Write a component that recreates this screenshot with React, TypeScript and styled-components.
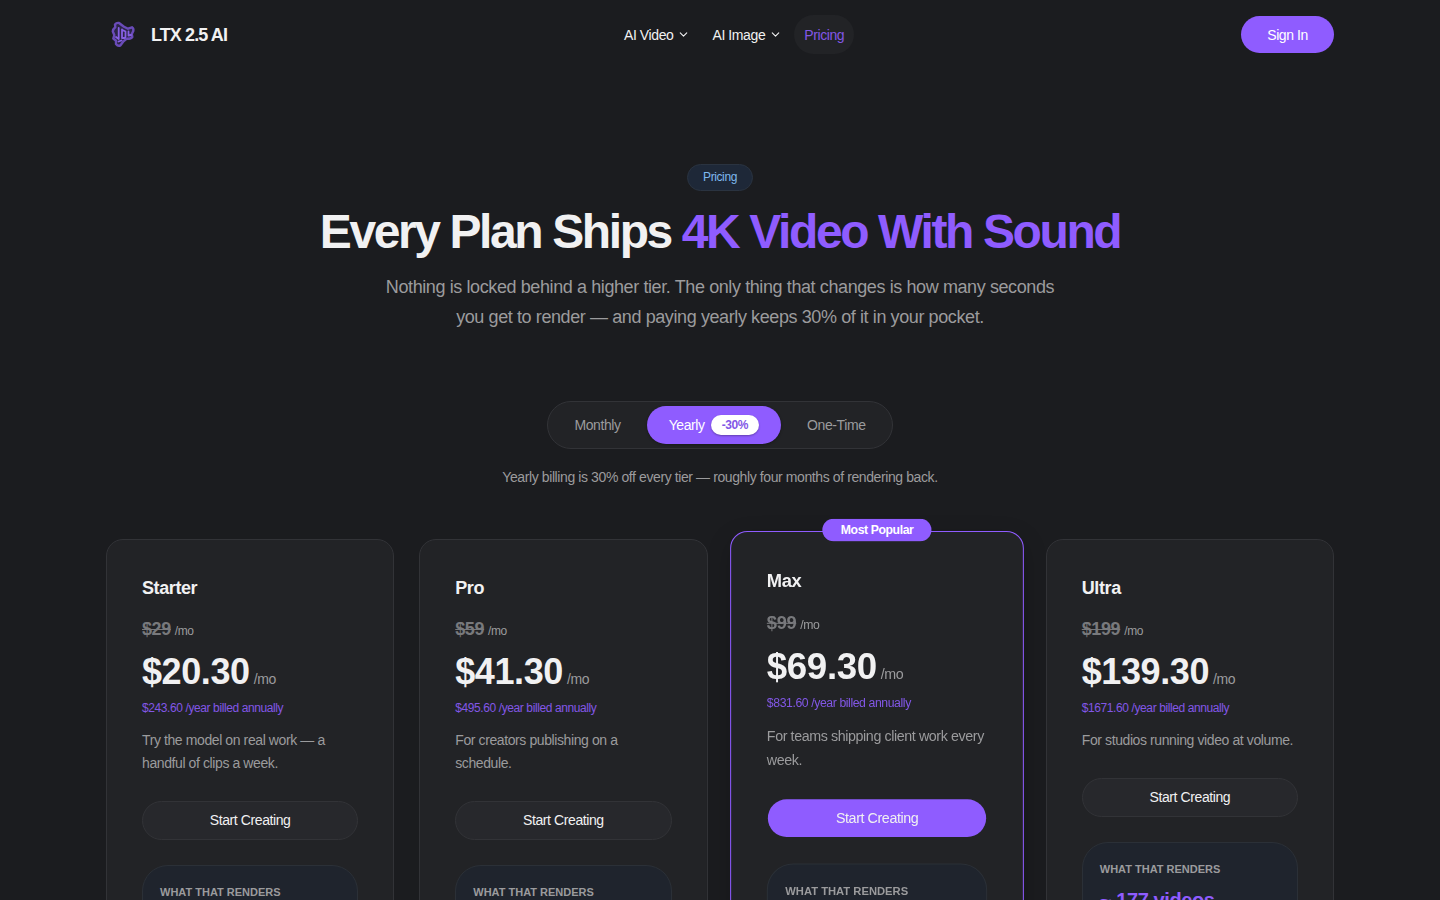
import React from "react";
import styled, { createGlobalStyle, css } from "styled-components";
import { ChevronDown } from "lucide-react";

const color = {
  page: "#1b1c1f",
  card: "#222326",
  raised: "#27282c",
  line: "#323337",
  text: "#f1f1f2",
  muted: "#9b9b9d",
  accent: "#8f5cff",
  accentText: "#8257e6",
};

const GlobalStyle = createGlobalStyle`
  *, *::before, *::after { box-sizing: border-box; }
  html {
    font-size: 16px;
    letter-spacing: -0.025em;
  }
  body {
    margin: 0;
    background: ${color.page};
    color: ${color.text};
    font-family: "Liberation Sans", Arial, sans-serif;
    font-size: 14px;
    line-height: 20px;
  }
  button, a { font: inherit; letter-spacing: inherit; color: inherit; text-decoration: none; }
  button { cursor: pointer; border: 0; padding: 0; background: none; }
  h1, h2, h3, p { margin: 0; }
`;

const Container = styled.div`
  width: 100%;
  max-width: 1280px;
  margin: 0 auto;
  padding: 0 26px;
`;

const HeaderRow = styled(Container)`
  display: flex;
  align-items: center;
  justify-content: space-between;
  padding-top: 15px;
  padding-bottom: 15px;
`;

const Brand = styled.a`
  display: flex;
  align-items: center;
  gap: 11px;
  font-size: 18px;
  font-weight: 700;
  letter-spacing: -0.05em;
`;

const Nav = styled.nav`
  display: flex;
  gap: 2px;
`;

const navItem = css`
  display: flex;
  align-items: center;
  gap: 4px;
  height: 39px;
  padding: 0 10px;
  border-radius: 20px;
`;

const NavButton = styled.button`
  ${navItem}
`;

const NavLink = styled.a`
  ${navItem}
  background: ${color.card};
  color: ${color.accentText};
`;

const SignIn = styled.button`
  height: 37px;
  padding: 0 26px;
  border-radius: 19px;
  background: ${color.accent};
  color: #fff;
`;

const Hero = styled.section`
  display: flex;
  flex-direction: column;
  align-items: center;
  padding-top: 95px;
  text-align: center;
`;

const Tag = styled.span`
  padding: 4px 15px;
  border: 1px solid #2a3340;
  border-radius: 14px;
  background: #1e2838;
  color: #7fb8ee;
  font-size: 12px;
  line-height: 17px;
`;

const Title = styled.h1`
  margin-top: 14px;
  font-size: 48px;
  line-height: 53px;
  letter-spacing: -0.05em;
`;

const Accent = styled.span`
  color: ${color.accent};
`;

const Lead = styled.p`
  max-width: 680px;
  margin-top: 14px;
  color: ${color.muted};
  font-size: 18px;
  line-height: 30px;
`;

const Periods = styled.div`
  display: flex;
  gap: 4px;
  margin-top: 69px;
  padding: 4px;
  border: 1px solid ${color.line};
  border-radius: 24px;
  background: ${color.card};
`;

const Period = styled.button<{ $active?: boolean }>`
  display: flex;
  align-items: center;
  gap: 6px;
  height: 38px;
  padding: 0 22px;
  border-radius: 19px;
  background: ${(p) => (p.$active ? color.accent : "transparent")};
  color: ${(p) => (p.$active ? "#fff" : color.muted)};
  box-shadow: ${(p) => (p.$active ? "0 1px 3px rgba(0, 0, 0, 0.3)" : "none")};
`;

const Discount = styled.span`
  padding: 2px 11px;
  border-radius: 10px;
  background: #fff;
  color: ${color.accentText};
  font-size: 12px;
  font-weight: 700;
  line-height: 16px;
  box-shadow: 0 1px 2px rgba(0, 0, 0, 0.3);
`;

const PeriodNote = styled.p`
  margin-top: 17px;
  color: ${color.muted};
  line-height: 22px;
`;

const Plans = styled(Container)`
  display: grid;
  grid-template-columns: repeat(4, minmax(0, 1fr));
  gap: 25px;
  margin-top: 51px;
  padding-bottom: 80px;
`;

const Card = styled.article<{ $featured?: boolean }>`
  position: relative;
  min-height: 800px;
  padding: 34px 35px;
  border: 1px solid ${(p) => (p.$featured ? color.accent : color.line)};
  border-radius: 17px;
  background: ${color.card};
  ${(p) =>
    p.$featured &&
    css`
      transform: scale(1.02);
      box-shadow: 0 8px 24px rgba(0, 0, 0, 0.2);
    `}
`;

const Popular = styled.span`
  position: absolute;
  top: -13px;
  left: 50%;
  transform: translateX(-50%);
  padding: 3px 18px;
  border-radius: 11px;
  background: ${color.accent};
  color: #fff;
  font-size: 12px;
  font-weight: 700;
  line-height: 16px;
  white-space: nowrap;
`;

const PlanName = styled.h2`
  font-size: 18px;
  line-height: 28px;
`;

const OldPrice = styled.p`
  display: flex;
  align-items: baseline;
  gap: 4px;
  margin-top: 13px;
  color: ${color.muted};
  font-size: 12px;
  line-height: 28px;

  s {
    color: #78797c;
    font-size: 18px;
    font-weight: 700;
  }
`;

const Price = styled.p`
  display: flex;
  align-items: baseline;
  gap: 4px;
  margin-top: 7px;
  color: ${color.muted};
  line-height: 40px;

  strong {
    color: ${color.text};
    font-size: 36px;
  }
`;

const Billed = styled.p`
  margin-top: 1px;
  color: ${color.accentText};
  font-size: 12px;
  line-height: 16px;
`;

const Description = styled.p`
  margin-top: 13px;
  color: ${color.muted};
  line-height: 23px;
`;

const Start = styled.button<{ $primary?: boolean }>`
  width: 100%;
  height: 39px;
  margin-top: 26px;
  padding-bottom: 2px;
  border: 1px solid ${(p) => (p.$primary ? "transparent" : color.line)};
  border-radius: 20px;
  background: ${(p) => (p.$primary ? color.accent : color.raised)};
  background-clip: ${(p) => (p.$primary ? "padding-box" : "border-box")};
`;

const Output = styled.div`
  min-height: 120px;
  margin-top: 25px;
  padding: 18px 17px;
  border: 1px solid #2b3037;
  border-radius: 26px;
  background: #1f242d;
`;

const OutputLabel = styled.h3`
  color: ${color.muted};
  font-size: 11px;
  line-height: 16px;
  letter-spacing: 0;
`;

const OutputValue = styled.p`
  margin-top: 9px;
  color: ${color.accent};
  font-size: 20px;
  font-weight: 700;
  line-height: 28px;
`;

const Logo = () => (
  <svg width="34" height="34" viewBox="0 0 34 34" fill="none" strokeLinejoin="round" strokeLinecap="round" aria-hidden="true">
    <path
      d="M9.300 9.300L9 6.500Q10.500 4.500 13 5L18 8.700L22 10.700L26 9.300Q27.800 10.500 27.300 13L25.800 16L26.300 19Q25 21 20.500 20.800L17.500 23.300L14.500 27.300Q12 28.500 10 26L10 22.700L7.300 20.500L8.300 17L6.800 13.500Q7 11 9.300 9.300Z"
      fill="#2c2547"
      stroke="#6a4bb8"
      strokeWidth="2.400"
    />
    <path
      d="M12.700 10V21M12.700 21L10 19M16 11.500V20M16 20H18.500Q19.500 20 19.500 18V13.500L16.500 12M22.500 13.500V17.500L25 17M12.500 23.500L15.500 22.500"
      stroke="#8760e4"
      strokeWidth="1.800"
    />
  </svg>
);

type Plan = {
  name: string;
  was: string;
  now: string;
  yearly: string;
  description: string;
  videos?: string;
  featured?: boolean;
};

const plans: Plan[] = [
  { name: "Starter", was: "$29", now: "$20.30", yearly: "$243.60", description: "Try the model on real work — a handful of clips a week." },
  { name: "Pro", was: "$59", now: "$41.30", yearly: "$495.60", description: "For creators publishing on a schedule." },
  { name: "Max", was: "$99", now: "$69.30", yearly: "$831.60", description: "For teams shipping client work every week.", featured: true },
  { name: "Ultra", was: "$199", now: "$139.30", yearly: "$1671.60", description: "For studios running video at volume.", videos: "~ 177 videos" },
];

const PlanCard = ({ plan }: { plan: Plan }) => (
  <Card $featured={plan.featured}>
    {plan.featured && <Popular>Most Popular</Popular>}
    <PlanName>{plan.name}</PlanName>
    <OldPrice>
      <s>{plan.was}</s>
      <span>/mo</span>
    </OldPrice>
    <Price>
      <strong>{plan.now}</strong>
      <span>/mo</span>
    </Price>
    <Billed>{plan.yearly} /year billed annually</Billed>
    <Description>{plan.description}</Description>
    <Start type="button" $primary={plan.featured}>Start Creating</Start>
    <Output>
      <OutputLabel>WHAT THAT RENDERS</OutputLabel>
      {plan.videos && <OutputValue>{plan.videos}</OutputValue>}
    </Output>
  </Card>
);

export default function App() {
  return (
    <>
      <GlobalStyle />
      <header>
        <HeaderRow>
          <Brand href="#">
            <Logo />
            LTX 2.5 AI
          </Brand>
          <Nav>
            <NavButton type="button">AI Video <ChevronDown size={13} /></NavButton>
            <NavButton type="button">AI Image <ChevronDown size={13} /></NavButton>
            <NavLink href="#pricing" aria-current="page">Pricing</NavLink>
          </Nav>
          <SignIn type="button">Sign In</SignIn>
        </HeaderRow>
      </header>
      <main id="pricing">
        <Hero>
          <Tag>Pricing</Tag>
          <Title>
            Every Plan Ships <Accent>4K Video With Sound</Accent>
          </Title>
          <Lead>
            Nothing is locked behind a higher tier. The only thing that changes is how many seconds you get to render — and
            paying yearly keeps 30% of it in your pocket.
          </Lead>
          <Periods>
            <Period type="button">Monthly</Period>
            <Period type="button" $active aria-pressed="true">
              Yearly <Discount>-30%</Discount>
            </Period>
            <Period type="button">One-Time</Period>
          </Periods>
          <PeriodNote>Yearly billing is 30% off every tier — roughly four months of rendering back.</PeriodNote>
        </Hero>
        <Plans>
          {plans.map((plan) => (
            <PlanCard key={plan.name} plan={plan} />
          ))}
        </Plans>
      </main>
    </>
  );
}
